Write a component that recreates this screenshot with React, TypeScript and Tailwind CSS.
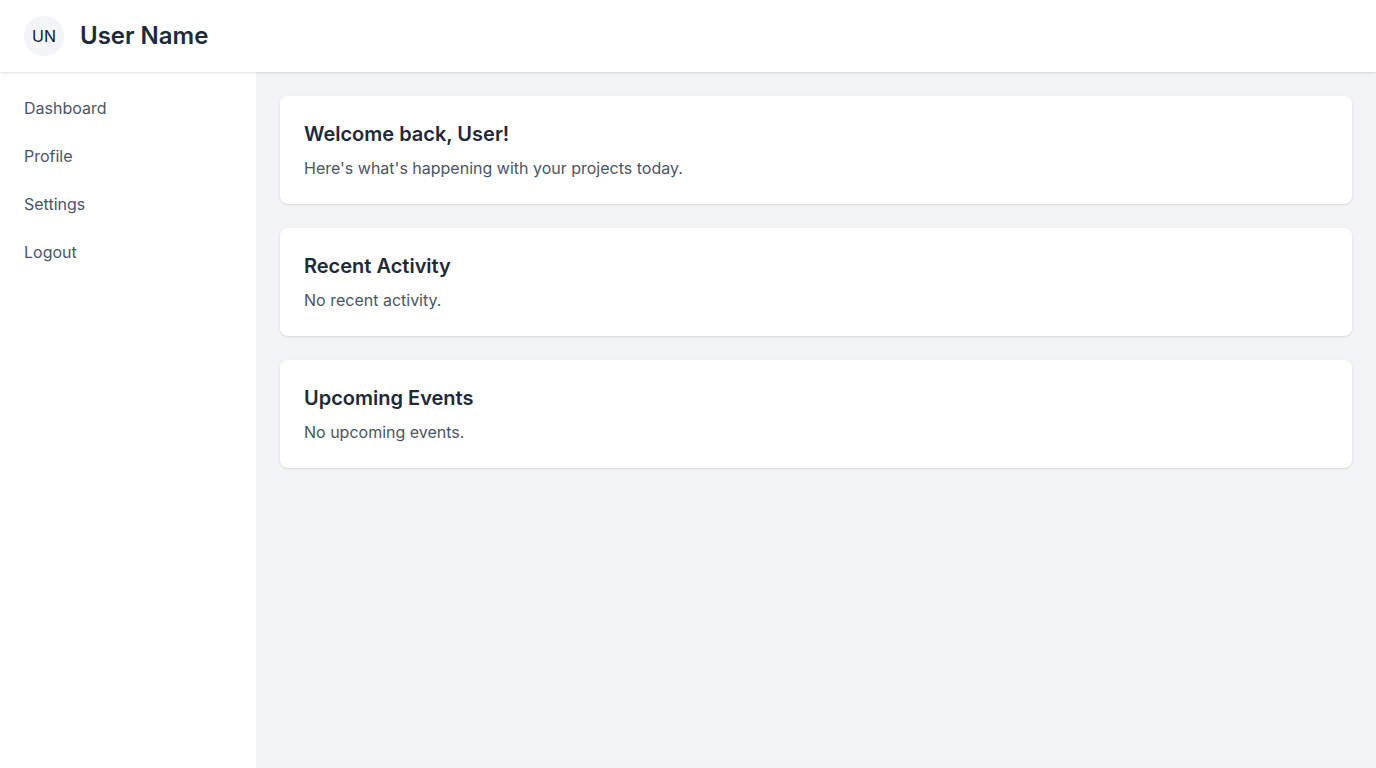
import * as React from "react";

const navItems: string[] = ["Dashboard", "Profile", "Settings", "Logout"];

const cards: { title: string; text: string }[] = [
  { title: "Welcome back, User!", text: "Here's what's happening with your projects today." },
  { title: "Recent Activity", text: "No recent activity." },
  { title: "Upcoming Events", text: "No upcoming events." },
];

export default function App() {
  return (
    <div className="min-h-screen flex flex-col bg-white font-['Inter',sans-serif]">
      <header className="h-[72px] flex items-center gap-4 px-6 bg-white shadow-sm relative z-10">
        <div className="w-10 h-10 rounded-full bg-gray-100 flex items-center justify-center text-base text-gray-900">
          UN
        </div>
        <h1 className="text-2xl font-semibold text-gray-800">User Name</h1>
      </header>
      <div className="flex flex-1">
        <aside className="w-64 bg-white p-6">
          <nav className="flex flex-col gap-6">
            {navItems.map((item) => (
              <a key={item} href="#" className="text-base leading-6 text-gray-600">
                {item}
              </a>
            ))}
          </nav>
        </aside>
        <main className="flex-1 bg-gray-100 p-6 flex flex-col gap-6">
          {cards.map((card) => (
            <div key={card.title} className="bg-white rounded-lg shadow-sm p-6">
              <h2 className="text-xl leading-7 font-semibold text-gray-800">{card.title}</h2>
              <p className="mt-2 text-base text-gray-600">{card.text}</p>
            </div>
          ))}
        </main>
      </div>
    </div>
  );
}
